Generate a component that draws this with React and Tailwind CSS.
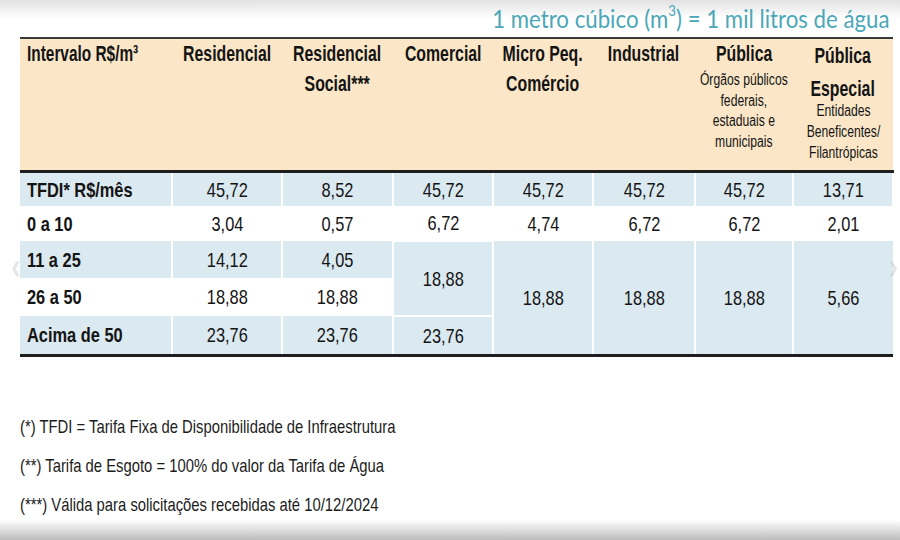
import React from "react";

const sans = { fontFamily: "'Liberation Sans', Arial, sans-serif" };

// texto estreito, centralizado na célula
const C = ({ children, className = "scale-x-[0.78]" }) => (
  <div className="flex justify-center">
    <span className={`shrink-0 whitespace-nowrap text-center ${className}`}>{children}</span>
  </div>
);

// texto estreito alinhado à esquerda
const L = ({ children, className = "scale-x-[0.78]" }) => (
  <span className={`inline-block whitespace-nowrap origin-left ${className}`}>{children}</span>
);

const rows = [
  { label: "TFDI* R$/mês", blue: true, h: "h-[35px]", cells: ["45,72", "8,52", "45,72", "45,72", "45,72", "45,72", "13,71"] },
  { label: "0 a 10", blue: false, h: "h-[35px]", cells: ["3,04", "0,57", "6,72", "4,74", "6,72", "6,72", "2,01"] },
];

const App = () => {
  return (
    <div className="w-[900px] h-[540px] bg-white flex flex-col relative overflow-hidden text-[#141414]" style={sans}>
      {/* faixa de cima */}
      <div className="h-[37px] bg-gradient-to-b from-[#e2e2e2] via-white to-white flex justify-end items-start pr-[10px]">
        <span
          className="inline-block origin-right scale-x-[0.89] text-[25px] leading-[30px] text-[#4ba7b7] mt-[3px] whitespace-nowrap"
          style={{ fontFamily: "Lato, 'Open Sans', sans-serif" }}
        >
          1 metro cúbico (m<sup className="text-[15px] align-[5px] leading-none">3</sup>) = 1 mil litros de água
        </span>
      </div>

      <div className="pl-[20px] pr-[7px]">
        <table className="w-[873px] table-fixed border-collapse">
          <colgroup>
            <col className="w-[152px]" />
            <col className="w-[110px]" />
            <col className="w-[111px]" />
            <col className="w-[100px]" />
            <col className="w-[100px]" />
            <col className="w-[102px]" />
            <col className="w-[98px]" />
            <col className="w-[100px]" />
          </colgroup>
          <thead>
            <tr className="bg-[#fbe7c8] border-t-2 border-[#3a3a3a] border-b-[3px] border-b-[#1e1e1e] h-[133px] align-top text-[22px] leading-[30px] font-bold">
              <th className="text-left pl-[7px]"><L className="scale-x-[0.7]">Intervalo R$/m³</L></th>
              <th><C className="scale-x-[0.72]">Residencial</C></th>
              <th><C className="scale-x-[0.72]">Residencial<br />Social***</C></th>
              <th><C className="scale-x-[0.72]">Comercial</C></th>
              <th><C className="scale-x-[0.72]">Micro Peq.<br />Comércio</C></th>
              <th><C className="scale-x-[0.72]">Industrial</C></th>
              <th>
                <C className="scale-x-[0.72]">Pública</C>
                <C className="scale-x-[0.76] font-normal text-[16px] leading-[20.5px] mt-[1px]">
                  Órgãos públicos<br />federais,<br />estaduais e<br />municipais
                </C>
              </th>
              <th>
                <C className="scale-x-[0.72] leading-[33px]">Pública<br />Especial</C>
                <C className="scale-x-[0.76] font-normal text-[16px] leading-[21px] mt-[-5px]">
                  Entidades<br />Beneficentes/<br />Filantrópicas
                </C>
              </th>
            </tr>
          </thead>
          <tbody className="text-[21px]">
            {rows.map((r) => (
              <tr key={r.label} className={`${r.h} ${r.blue ? "bg-[#dbe9f0]" : "bg-white"}`}>
                <td className="font-bold pl-[7px] border-r-2 border-white"><L>{r.label}</L></td>
                {r.cells.map((c, i) => (
                  <td key={i} className="border-x-2 border-white"><C>{c}</C></td>
                ))}
              </tr>
            ))}
            <tr className="h-[37px]">
              <td className="font-bold pl-[7px] bg-[#dbe9f0] border-r-2 border-white"><L>11 a 25</L></td>
              <td className="bg-[#dbe9f0] border-x-2 border-white"><C>14,12</C></td>
              <td className="bg-[#dbe9f0] border-x-2 border-white"><C>4,05</C></td>
              <td rowSpan={2} className="bg-[#dbe9f0] border-2 border-white"><C>18,88</C></td>
              <td rowSpan={3} className="bg-[#dbe9f0] border-x-2 border-white"><C>18,88</C></td>
              <td rowSpan={3} className="bg-[#dbe9f0] border-x-2 border-white"><C>18,88</C></td>
              <td rowSpan={3} className="bg-[#dbe9f0] border-x-2 border-white"><C>18,88</C></td>
              <td rowSpan={3} className="bg-[#dbe9f0] border-l-2 border-white"><C>5,66</C></td>
            </tr>
            <tr className="h-[38px]">
              <td className="font-bold pl-[7px] border-r-2 border-white"><L>26 a 50</L></td>
              <td className="border-x-2 border-white"><C>18,88</C></td>
              <td className="border-x-2 border-white"><C>18,88</C></td>
            </tr>
            <tr className="h-[39px] bg-[#dbe9f0] border-b-[3px] border-b-[#1e1e1e]">
              <td className="font-bold pl-[7px] border-r-2 border-white"><L>Acima de 50</L></td>
              <td className="border-x-2 border-white"><C>23,76</C></td>
              <td className="border-x-2 border-white"><C>23,76</C></td>
              <td className="border-x-2 border-white"><C>23,76</C></td>
            </tr>
          </tbody>
        </table>
      </div>

      {/* notas */}
      <div className="pl-[20px] pt-[56px] flex flex-col gap-[11px] text-[19px] leading-[28px] text-[#1c1c1c]">
        <p><L>(*) TFDI = Tarifa Fixa de Disponibilidade de Infraestrutura</L></p>
        <p><L>(**) Tarifa de Esgoto = 100% do valor da Tarifa de Água</L></p>
        <p><L>(***) Válida para solicitações recebidas até 10/12/2024</L></p>
      </div>

      <div className="mt-auto h-[20px] bg-gradient-to-b from-white to-[#bcbcbc]" />

      {/* setas do carrossel */}
      <span className="absolute left-[3px] top-[261px] text-[#c6c6c6] text-[17px] leading-none">《</span>
      <span className="absolute right-[-6px] top-[261px] text-[#c6c6c6] text-[17px] leading-none">》</span>
    </div>
  );
};

export default App;
